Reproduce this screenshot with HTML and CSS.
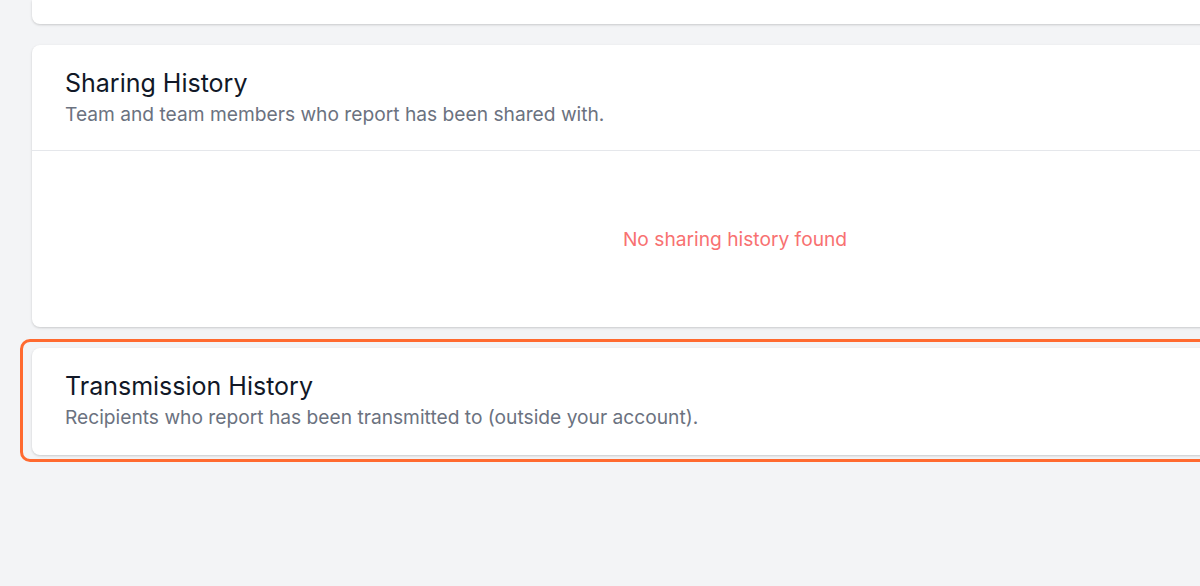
FILE: index.html
```
<!DOCTYPE html>
<html lang="en">
<head>
    <meta charset="UTF-8">
    <meta name="viewport" content="width=device-width, initial-scale=1.0">
    <title>Report - History</title>
    <link rel="stylesheet" href="styles.css">
</head>
<body>

<div class="viewport">
    <div class="page">
        <div class="card card-tail"></div>

        <div class="card">
            <div class="card-header">
                <h3>Sharing History</h3>
                <p>Team and team members who report has been shared with.</p>
            </div>
            <div class="card-body empty">No sharing history found</div>
        </div>

        <div class="card highlight">
            <div class="card-header">
                <h3>Transmission History</h3>
                <p>Recipients who report has been transmitted to (outside your account).</p>
            </div>
        </div>
    </div>
</div>

</body>
</html>
```

FILE: styles.css
```
* {
    box-sizing: border-box;
    margin: 0;
    padding: 0;
}

body {
    font-family: 'Inter', 'Noto Sans', sans-serif;
    background-color: #f3f4f6;
}

.viewport {
    width: 1200px;
    height: 586px;
    overflow: hidden;
}

.page {
    width: 1438px;
    padding-left: 32px;
    display: flex;
    flex-direction: column;
    gap: 21px;
}

.card {
    background-color: #fff;
    border-radius: 8px;
    box-shadow: 0 1px 3px rgba(0, 0, 0, 0.12), 0 1px 2px rgba(0, 0, 0, 0.06);
}

.card-tail {
    height: 24px;
    border-radius: 0 0 8px 8px;
}

.card-header {
    padding: 22px 33px 21px;
}

.card-header h3 {
    font-size: 25px;
    font-weight: 400;
    line-height: 32px;
    color: #111827;
}

.card-header p {
    font-size: 19.2px;
    line-height: 30px;
    color: #6b7280;
}

.card-body {
    border-top: 1px solid #e5e7eb;
}

.empty {
    height: 177px;
    display: flex;
    align-items: center;
    justify-content: center;
    font-size: 19.2px;
    color: #f87171;
}

.highlight {
    position: relative;
}

.highlight .card-header {
    padding-bottom: 23px;
}

/* guide outline drawn over the card */
.highlight::after {
    content: '';
    position: absolute;
    top: -9px;
    left: -12px;
    right: -12px;
    bottom: -7px;
    border: 3px solid #ff6a30;
    border-radius: 10px;
}
```
